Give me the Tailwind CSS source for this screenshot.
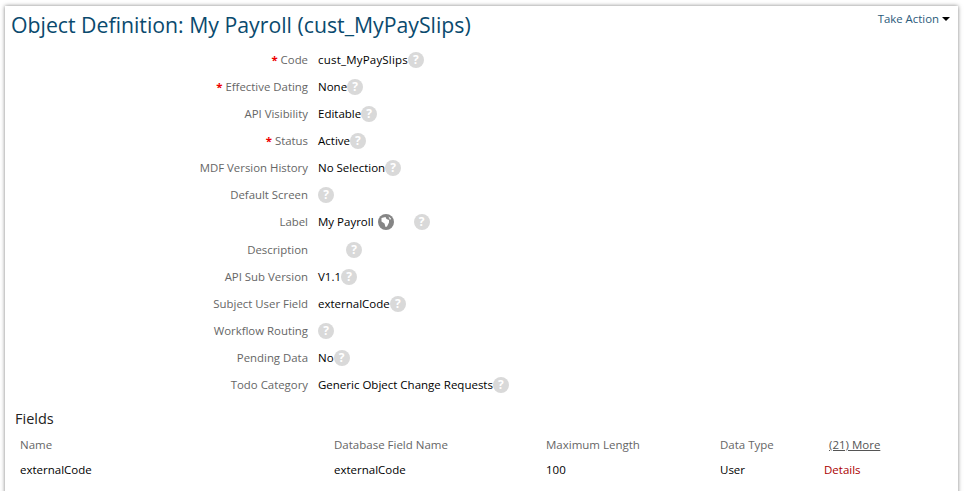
<!DOCTYPE html>
<html lang="en">
<head>
    <meta charset="UTF-8">
    <title>Object Definition</title>
    <script src="https://cdn.jsdelivr.net/npm/@tailwindcss/browser@4"></script>
</head>
<body class="bg-white h-[491px] overflow-hidden font-['Open_Sans',sans-serif]">
    <!-- Card -->
    <div class="ml-[5px] mr-[6px] mt-[6px] h-[500px] bg-white shadow-[0_0_4px_rgba(0,0,0,0.5)] pt-[6px]">
        <!-- Header -->
        <div class="flex justify-between pl-[6px] pr-[8px]">
            <h1 class="text-[21.25px] leading-[26px] text-[#0a4a6e]">Object Definition: My Payroll (cust_MyPaySlips)</h1>
            <div class="flex items-center gap-[3px] h-[14px] text-[11.4px] text-[#2a5a7a]">
                Take Action
                <span class="w-0 h-0 border-x-[4px] border-x-transparent border-t-[4px] border-t-black"></span>
            </div>
        </div>

        <!-- Definition rows -->
        <div class="mt-[8px] text-[11.5px]">
            <div class="flex items-center h-[27px]">
                <div class="w-[303px] text-right text-[#666] text-[11.4px]"><span class="text-[#e00] font-bold">*</span> Code</div>
                <div class="ml-[10px] text-black tracking-[0.2px]">cust_MyPaySlips</div>
                <span class="w-4 h-4 rounded-full bg-[#d9d9d9] text-white text-[12px] font-bold leading-4 text-center">?</span>
            </div>
            <div class="flex items-center h-[27px]">
                <div class="w-[303px] text-right text-[#666] text-[11.4px]"><span class="text-[#e00] font-bold">*</span> Effective Dating</div>
                <div class="ml-[10px] text-black">None</div>
                <span class="w-4 h-4 rounded-full bg-[#d9d9d9] text-white text-[12px] font-bold leading-4 text-center">?</span>
            </div>
            <div class="flex items-center h-[27px]">
                <div class="w-[303px] text-right text-[#666] text-[11.4px]">API Visibility</div>
                <div class="ml-[10px] text-black">Editable</div>
                <span class="w-4 h-4 rounded-full bg-[#d9d9d9] text-white text-[12px] font-bold leading-4 text-center">?</span>
            </div>
            <div class="flex items-center h-[27px]">
                <div class="w-[303px] text-right text-[#666] text-[11.4px]"><span class="text-[#e00] font-bold">*</span> Status</div>
                <div class="ml-[10px] text-black">Active</div>
                <span class="w-4 h-4 rounded-full bg-[#d9d9d9] text-white text-[12px] font-bold leading-4 text-center">?</span>
            </div>
            <div class="flex items-center h-[27px]">
                <div class="w-[303px] text-right text-[#666] text-[11.4px]">MDF Version History</div>
                <div class="ml-[10px] text-black">No Selection</div>
                <span class="w-4 h-4 rounded-full bg-[#d9d9d9] text-white text-[12px] font-bold leading-4 text-center">?</span>
            </div>
            <div class="flex items-center h-[27px]">
                <div class="w-[303px] text-right text-[#666] text-[11.4px]">Default Screen</div>
                <span class="ml-[10px] w-4 h-4 rounded-full bg-[#d9d9d9] text-white text-[12px] font-bold leading-4 text-center">?</span>
            </div>
            <div class="flex items-center h-[28px]">
                <div class="w-[303px] text-right text-[#666] text-[11.4px]">Label</div>
                <div class="ml-[10px] text-black">My Payroll</div>
                <svg class="ml-[4px] w-4 h-4" viewBox="0 0 16 16"><circle cx="8" cy="8" r="8" fill="#858585"/><path d="M3.5 4 L7.5 3 L8.5 5 L11 6 L11 8.5 L9 12.5 L7.5 13 L6.5 9.5 L3.5 7.5 Z" fill="#fff"/><path d="M10.5 2.5 L13 4.5 L12 6 Z" fill="#fff"/></svg>
                <span class="ml-[20px] w-4 h-4 rounded-full bg-[#d9d9d9] text-white text-[12px] font-bold leading-4 text-center">?</span>
            </div>
            <div class="flex items-center h-[27px]">
                <div class="w-[303px] text-right text-[#666] text-[11.4px]">Description</div>
                <span class="ml-[38px] w-4 h-4 rounded-full bg-[#d9d9d9] text-white text-[12px] font-bold leading-4 text-center">?</span>
            </div>
            <div class="flex items-center h-[27px]">
                <div class="w-[303px] text-right text-[#666] text-[11.4px]">API Sub Version</div>
                <div class="ml-[10px] text-black">V1.1</div>
                <span class="w-4 h-4 rounded-full bg-[#d9d9d9] text-white text-[12px] font-bold leading-4 text-center">?</span>
            </div>
            <div class="flex items-center h-[27px]">
                <div class="w-[303px] text-right text-[#666] text-[11.4px]">Subject User Field</div>
                <div class="ml-[10px] text-black">externalCode</div>
                <span class="w-4 h-4 rounded-full bg-[#d9d9d9] text-white text-[12px] font-bold leading-4 text-center">?</span>
            </div>
            <div class="flex items-center h-[27px]">
                <div class="w-[303px] text-right text-[#666] text-[11.4px]">Workflow Routing</div>
                <span class="ml-[10px] w-4 h-4 rounded-full bg-[#d9d9d9] text-white text-[12px] font-bold leading-4 text-center">?</span>
            </div>
            <div class="flex items-center h-[27px]">
                <div class="w-[303px] text-right text-[#666] text-[11.4px]">Pending Data</div>
                <div class="ml-[10px] text-black">No</div>
                <span class="w-4 h-4 rounded-full bg-[#d9d9d9] text-white text-[12px] font-bold leading-4 text-center">?</span>
            </div>
            <div class="flex items-center h-[27px]">
                <div class="w-[303px] text-right text-[#666] text-[11.4px]">Todo Category</div>
                <div class="ml-[10px] text-black">Generic Object Change Requests</div>
                <span class="w-4 h-4 rounded-full bg-[#d9d9d9] text-white text-[12px] font-bold leading-4 text-center">?</span>
            </div>
        </div>

        <!-- Fields -->
        <h2 class="mt-[11px] ml-[10px] text-[14.5px] leading-5 text-[#222]">Fields</h2>
        <div class="grid grid-cols-[314px_212px_174px_104px_1fr] pl-[15px] mt-[3px] text-[11.5px]">
            <div class="h-[25px] leading-[25px] text-[#666]">Name</div>
            <div class="h-[25px] leading-[25px] text-[#666]">Database Field Name</div>
            <div class="h-[25px] leading-[25px] text-[#666]">Maximum Length</div>
            <div class="h-[25px] leading-[25px] text-[#666]">Data Type</div>
            <div class="h-[25px] leading-[25px] text-[#555] underline pl-[5px]">(21) More</div>
            <div class="h-[25px] leading-[25px] text-black">externalCode</div>
            <div class="h-[25px] leading-[25px] text-black">externalCode</div>
            <div class="h-[25px] leading-[25px] text-black">100</div>
            <div class="h-[25px] leading-[25px] text-black">User</div>
            <div class="h-[25px] leading-[25px] text-[#a00]">Details</div>
            <div class="h-[28px] leading-[28px]"></div>
            <div class="h-[28px] leading-[28px]"></div>
            <div class="h-[28px] leading-[28px]"></div>
            <div class="h-[28px] leading-[28px] text-black">Date</div>
            <div class="h-[28px] leading-[28px] text-[#a00]">Details</div>
        </div>
    </div>
</body>
</html>
